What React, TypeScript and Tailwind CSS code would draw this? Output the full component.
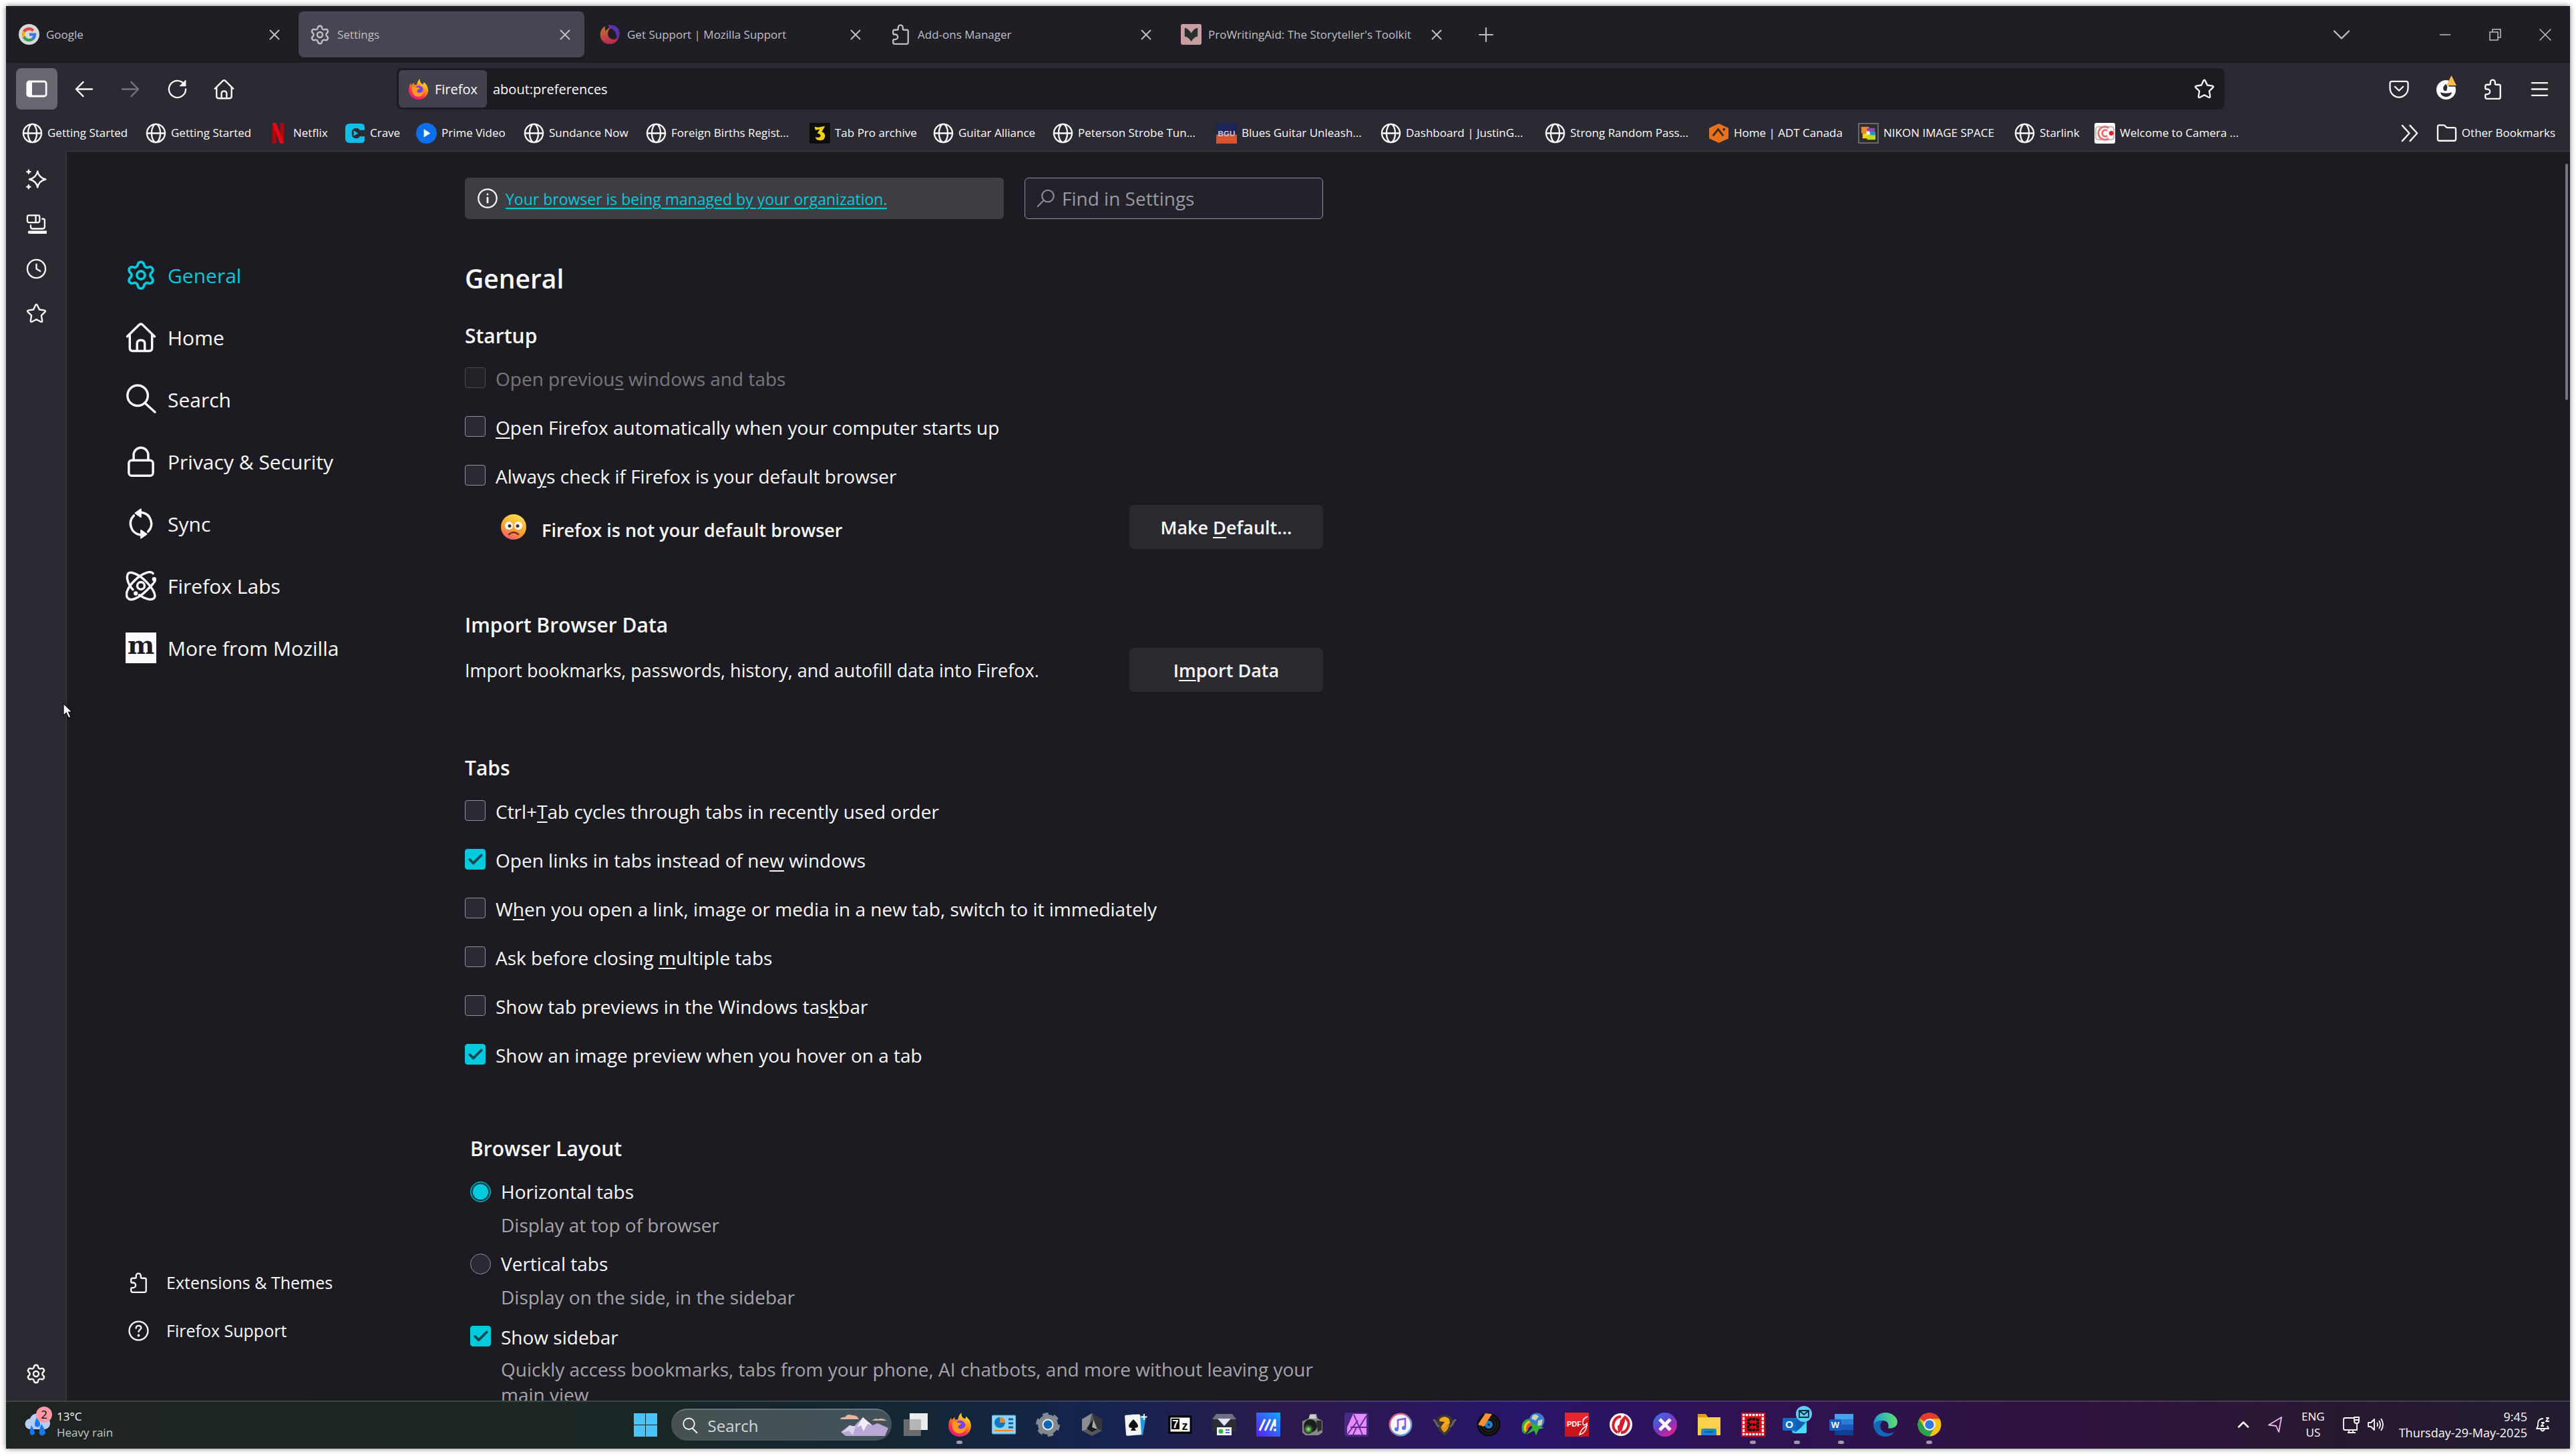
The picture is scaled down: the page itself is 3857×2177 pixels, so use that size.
import type { ReactNode } from "react";
import { Check, ChevronDown, ChevronUp, Minus, Plus, Settings, X } from "lucide-react";

/* ---------- line icons, 16 unit grid ---------- */

function Line({ size = "size-[31px]", children }: { size?: string; children: ReactNode }) {
  return (
    <svg
      viewBox="0 0 16 16"
      className={`${size} shrink-0`}
      fill="none"
      stroke="currentColor"
      strokeWidth="1.2"
      strokeLinecap="round"
      strokeLinejoin="round"
      aria-hidden="true"
    >
      {children}
    </svg>
  );
}

const puzzle = (
  <path d="M2.2 6.4V5.6q0-1.1 1.1-1.1h2q.8 0 .8-.8V2.6a1.8 1.8 0 0 1 3.600 0v1.100q0 .8.8.8h2.200q1.100 0 1.100 1.100v8.600q0 1.200-1.200 1.200H3.400q-1.200 0-1.200-1.200v-1.600q0-.7.7-.7h.9a1.800 1.800 0 0 0 0-3.900h-.9q-.7 0-.7-.9z" />
);

const house = (
  <>
    <path d="M.9 7.600 7 1.600q1-1 2 0l6.100 6" />
    <path d="M2.200 6.600v7q0 1.500 1.500 1.500h8.600q1.500 0 1.500-1.500v-7" />
    <path d="M6 15v-3.600q0-1.900 2-1.900t2 1.900V15" />
  </>
);

const star = (
  <path d="M7.300 1.500q.7-1.300 1.400 0l1.600 3.400 3.900.6q1.300.3.4 1.300l-2.800 2.700.7 4q.1 1.300-1.100.8L8 12.500l-3.400 1.800q-1.200.5-1.100-.8l.7-4L1.400 6.800q-.9-1 .4-1.300l3.900-.6z" />
);

const globe = (
  <>
    <circle cx="8" cy="8" r="7" />
    <ellipse cx="8" cy="8" rx="3.4" ry="7" />
    <path d="M1 8h14" />
  </>
);

const lock = (
  <>
    <rect x="1.7" y="7.4" width="12.6" height="8" rx="1.5" />
    <path d="M4.200 7.200V4.600a3.800 3.800 0 0 1 7.600 0v2.600" />
  </>
);

const search = (
  <>
    <circle cx="6.3" cy="6" r="5.300" />
    <path d="m10.200 10 5.100 4.600" />
  </>
);

const sync = (
  <>
    <path d="M4.300 3.800A5.900 5.900 0 0 0 7.600 13.800M11.700 12.200A5.900 5.900 0 0 0 8.400 2.200" />
    <path d="M8 .4v4.200L5 2.500zM8 11.400v4.200l3-2.100z" fill="currentColor" strokeWidth=".6" />
  </>
);

const labs = (
  <>
    <circle cx="8" cy="8" r="1.9" />
    <path d="M14.300 1.600C12.900-.2 8.300 1.800 4.700 5.300S-.5 12.600 1.200 14.500s6-.4 9.600-3.900 4.300-4.700 4.500-5.100" strokeDasharray="38 1" />
    <path d="M3.800 10C.9 7 .2 3 1.400 1.600s5.600.5 9.100 4 5.800 7.400 4.300 8.900c-1.500 1.400-4.900.3-7.600-1.700" />
    <circle cx="5.3" cy="12" r=".5" fill="currentColor" />
    <circle cx="14.900" cy="4.600" r=".5" fill="currentColor" />
  </>
);

const sparkles = (
  <>
    <path d="M8.900 1.800q.9 4.900 6.300 6.200-5.400 1.300-6.300 6.200Q8 9.300 2.600 8 8 6.700 8.900 1.800z" />
    <path d="M2 .9v2.600M.7 2.200h2.600M2 12.500v2.600M.7 13.800h2.600" />
  </>
);

const syncedTabs = (
  <>
    <rect x="1" y="1.2" width="9.5" height="5.6" rx="1.2" />
    <path d="M7.500 1.400v5.200M12.500 4h.8q1.100 0 1.100 1.100v5q0 1.500-1.500 1.500H5q-1.400 0-1.400-1.600V9" />
    <path d="M2.600 14.300h12.800" strokeWidth="2.4" />
  </>
);

const clock = (
  <>
    <circle cx="8" cy="8" r="7" />
    <path d="M8 4.500V8l3 1.800" />
  </>
);

const help = (
  <>
    <circle cx="8" cy="8" r="7.2" />
    <path d="M6 6q.1-1.900 2-1.900t2 1.700c0 1.300-2 1.400-2 3" />
    <circle cx="8" cy="11.6" r=".4" fill="currentColor" />
  </>
);

const gear = <Settings className="size-[32px] shrink-0" strokeWidth={1.8} />;

/* ---------- coloured marks ---------- */

function FirefoxLogo({ size }: { size: string }) {
  return (
    <svg viewBox="0 0 32 32" className={`${size} shrink-0`} aria-hidden="true">
      <defs>
        <linearGradient id="fx-body" x1=".8" y1="0" x2=".25" y2="1">
          <stop offset="0" stopColor="#fff44f" />
          <stop offset=".4" stopColor="#ff980e" />
          <stop offset=".7" stopColor="#ff3647" />
          <stop offset="1" stopColor="#e31587" />
        </linearGradient>
      </defs>
      <path
        fill="url(#fx-body)"
        d="M18.500 0c-1 3 .3 5.600 2.500 7.400 2 1.400 3.300 1 3.200-2.200C28 8 31 12 31 18c0 8-6.700 14-15 14S1 26 1 17.600c0-4 1-7.600 3.600-10.800l.7 3.200 3.800-4 .6 3.600c1.200-.4 2.600-.4 3.700 0C14 6 15.600 2 18.500 0z"
      />
      <circle cx="16.500" cy="17.500" r="7" fill="#7a3ff2" />
      <path fill="#ff9a1f" d="M6 13c3-2 5-1.400 7.500.5 2 .7 3.500 0 5 1-1 1.800-3.500 2-4.500 3.500-.8 1.500.5 4 4 3.700 3-.3 5-2 5.500-5 2 6-2.500 11-8 11S5 23 6 13z" />
    </svg>
  );
}

function GoogleMark() {
  return (
    <svg viewBox="0 0 32 32" className="size-[31px] shrink-0" aria-hidden="true">
      <circle cx="16" cy="16" r="16" fill="#d9d9db" />
      <g fill="none" strokeWidth="4.5">
        <path d="M22.500 10.200A9 9 0 0 0 8 12.200" stroke="#e2483b" />
        <path d="M8.300 11.600a9 9 0 0 0 0 8.800" stroke="#efb412" />
        <path d="M8 19.800a9 9 0 0 0 13.800 3" stroke="#33a053" />
        <path d="M16.500 16.200h8.300a9 9 0 0 1-3.300 6.800" stroke="#3b78e0" />
      </g>
    </svg>
  );
}

function MozillaSupportMark() {
  return (
    <svg viewBox="0 0 32 32" className="size-[31px] shrink-0" aria-hidden="true">
      <defs>
        <linearGradient id="sumo" x1="0" y1="0" x2=".4" y2="1">
          <stop offset="0" stopColor="#c9772e" />
          <stop offset="1" stopColor="#b8284f" />
        </linearGradient>
      </defs>
      <path d="M12 2c10-3 19 4 19 13a12 12 0 0 1-5 9c1-7-2-15-9-17z" fill="#5a2fae" />
      <path d="M8 3C2 8 0 13 1 19c1 7 7 12 14.500 12S28 26 30 18c-3 6-10 7-14 4-5-4-5-12 2-18C13 6 11 8 9 11c-1-3-1-5-1-8z" fill="url(#sumo)" />
    </svg>
  );
}

/* small square favicon with a coloured ground */
function Tile({ bg, children }: { bg: string; children?: ReactNode }) {
  return (
    <svg viewBox="0 0 32 32" className="size-[31px] shrink-0" aria-hidden="true">
      <rect width="32" height="32" rx="3" fill={bg} />
      {children}
    </svg>
  );
}

const svgFont = "Liberation Sans, sans-serif";

const favicons = {
  globe: <Line>{globe}</Line>,
  netflix: (
    <svg viewBox="0 0 32 32" className="size-[31px] shrink-0" aria-hidden="true">
      <path d="M7 0h6v32H7zM19 0h6v32h-6z" fill="#b1060f" />
      <path d="M7 0h6l12 32h-6z" fill="#e50914" />
    </svg>
  ),
  crave: (
    <svg viewBox="0 0 32 32" className="size-[31px] shrink-0" aria-hidden="true">
      <path d="M8 1h17q6 0 6 6v4h-8q-1-3-5-3-7 0-7 8t7 8q4 0 5-3h8v5q0 5-6 5H8q-7 0-7-7V8q0-7 7-7z" fill="#12bdec" />
      <path d="M14 11.500 21 16l-7 4.500z" fill="#12bdec" />
    </svg>
  ),
  prime: (
    <svg viewBox="0 0 32 32" className="size-[31px] shrink-0" aria-hidden="true">
      <circle cx="16" cy="16" r="16" fill="#0b6ff0" />
      <path d="M12 9.500 22 16l-10 6.500z" fill="#fff" />
    </svg>
  ),
  tabPro: (
    <Tile bg="#0d0d0d">
      <path d="m8 6 5 1 11-2-5 9q5 1 5 6 0 7-8 7-6 0-7-5 6 2 8-1 1-4-5-5l4-6-7 1z" fill="#f2d016" />
    </Tile>
  ),
  blues: (
    <Tile bg="#1d2457">
      <path d="M0 18h32v14H0z" fill="#d9532c" />
      <text x="16" y="21" textAnchor="middle" fontSize="12" fontWeight="700" fontFamily={svgFont} fill="#cfc5da">BGU</text>
    </Tile>
  ),
  adt: (
    <svg viewBox="0 0 32 32" className="size-[31px] shrink-0" aria-hidden="true">
      <path d="M16 1 31 8v16l-15 7L1 24V8z" fill="#e8711c" />
      <path d="m7 20 8-10 8 10" fill="none" stroke="#3c2a1e" strokeWidth="3" />
      <circle cx="24" cy="10" r="2" fill="#3c2a1e" />
    </svg>
  ),
  nikon: (
    <Tile bg="#2d2c2b">
      <rect x="1" y="1" width="30" height="30" fill="none" stroke="#6b6b6b" strokeWidth="2" />
      <path d="M5 6h12v10H5z" fill="#f0872f" />
      <path d="M14 8h12v9H14z" fill="#8d48b4" />
      <path d="M14 16h13v10H14z" fill="#c3d62e" />
      <path d="M7 16h8v8H7z" fill="#f2d500" />
      <path d="M19 14h8v5h-8z" fill="#10a3c8" />
      <path d="M13 13h5v5h-5z" fill="#fff" />
    </Tile>
  ),
  camera: (
    <Tile bg="#fff">
      <rect x="2" y="6" width="28" height="20" rx="4" fill="none" stroke="#b9b9b9" strokeWidth="2" />
      <path d="M22 8a10 10 0 1 0 0 16M20 12a5 5 0 1 0 0 8" fill="none" stroke="#ea7078" strokeWidth="3" />
      <circle cx="26" cy="16" r="3.5" fill="#e2202c" />
    </Tile>
  ),
};

/* ---------- tab strip ---------- */

const tabs = [
  { title: "Google", icon: <GoogleMark /> },
  { title: "Settings", icon: gear, active: true },
  { title: "Get Support | Mozilla Support", icon: <MozillaSupportMark /> },
  { title: "Add-ons Manager", icon: <Line>{puzzle}</Line> },
  {
    title: "ProWritingAid: The Storyteller's Toolkit",
    icon: (
      <Tile bg="#c99ea2">
        <path d="M6 6q6 1 10 8 4-7 10-8v13q-6 1-10 8-4-7-10-8z" fill="#25302f" />
      </Tile>
    ),
  },
];

function TabStrip() {
  return (
    <header className="flex h-[85px] shrink-0 items-center bg-[#1f1e25] pl-[3px] text-[#bfbfc3]">
      <div className="flex gap-[7px]">
        {tabs.map((tab) => (
          <div
            key={tab.title}
            className={`flex h-[69px] w-[428px] items-center rounded-lg pr-[14px] pl-[16px] ${tab.active ? "bg-[#474551] shadow-md" : ""}`}
          >
            {tab.icon}
            <span className="ml-[10px] flex-1 truncate text-[17px]">{tab.title}</span>
            <button aria-label={`Close ${tab.title}`} className="flex size-[31px] items-center justify-center">
              <X className="size-[26px]" strokeWidth={1.8} />
            </button>
          </div>
        ))}
      </div>
      <button aria-label="New tab" className="ml-[14px] flex size-[62px] items-center justify-center">
        <Plus className="size-[34px]" strokeWidth={1.5} />
      </button>
      <div className="ml-auto flex items-center">
        <button aria-label="List all tabs" className="mr-[86px] flex size-[62px] items-center justify-center">
          <ChevronDown className="size-[44px]" strokeWidth={1.3} />
        </button>
        <button aria-label="Minimize" className="flex w-[75px] justify-center">
          <Minus className="size-[26px]" strokeWidth={1.2} />
        </button>
        <button aria-label="Restore" className="flex w-[75px] justify-center">
          <svg viewBox="0 0 18 18" className="size-[18px]" fill="none" stroke="currentColor" strokeWidth="1.5">
            <path d="M1 5h12v12H1zM5 5V1h12v12h-4" />
          </svg>
        </button>
        <button aria-label="Close window" className="flex w-[75px] justify-center">
          <X className="size-[32px]" strokeWidth={1.1} />
        </button>
      </div>
    </header>
  );
}

/* ---------- navigation and bookmarks ---------- */

function ToolButton({ label, className = "", children }: { label: string; className?: string; children: ReactNode }) {
  return (
    <button aria-label={label} className={`flex size-[62px] shrink-0 items-center justify-center rounded-lg ${className}`}>
      {children}
    </button>
  );
}

function NavBar() {
  return (
    <div className="flex h-[78px] shrink-0 items-center px-[15px]">
      <ToolButton label="Show sidebars" className="bg-[#686770]">
        <svg viewBox="0 0 16 16" className="size-[32px]" fill="none" stroke="currentColor">
          <rect x=".9" y="2.5" width="14.2" height="11" rx="1.5" strokeWidth="1.4" />
          <path d="M3 3v10" strokeWidth="3" />
        </svg>
      </ToolButton>
      <div className="ml-2 flex gap-2">
        <ToolButton label="Back">
          <Line><path d="M14.500 8H2M7.500 2.500 2 8l5.500 5.500" /></Line>
        </ToolButton>
        <ToolButton label="Forward" className="text-[#74737b]">
          <Line><path d="M1.500 8H14M8.500 2.500 14 8l-5.500 5.500" /></Line>
        </ToolButton>
        <ToolButton label="Reload">
          <Line>
            <path d="M13.300 4.200A6.500 6.500 0 1 0 14.500 8" />
            <path d="M14.400 1.200v4.300h-4.300z" fill="currentColor" strokeWidth=".6" />
          </Line>
        </ToolButton>
        <ToolButton label="Home">
          <Line>{house}</Line>
        </ToolButton>
      </div>
      <div className="mr-[230px] ml-[228px] flex h-[62px] flex-1 items-center rounded-lg bg-[#1c1b22] pl-[3px]">
        <div className="flex h-[56px] w-[132px] items-center justify-center gap-[9px] rounded-md bg-[#42414d]">
          <FirefoxLogo size="size-[31px]" />
          <span className="pt-[2px] text-[20px]">Firefox</span>
        </div>
        <input
          aria-label="Search or enter address"
          defaultValue="about:preferences"
          className="ml-[9px] flex-1 bg-transparent pt-[2px] text-[20px] outline-none"
        />
        <ToolButton label="Bookmark this page">
          <Line>{star}</Line>
        </ToolButton>
      </div>
      <div className="flex gap-[8px]">
        <ToolButton label="Save to Pocket">
          <Line size="size-[30px]">
            <path d="M2.300 2.100h11.400q1.500 0 1.500 1.500V7.500a7.200 7.200 0 0 1-14.400 0V3.600q0-1.500 1.500-1.500z" />
            <path d="M4.700 6.300 8 9.500l3.300-3.200" />
          </Line>
        </ToolButton>
        <ToolButton label="Account" className="relative">
          <svg viewBox="0 0 32 32" className="size-[31px]">
            <circle cx="16" cy="17" r="15" fill="currentColor" />
            <path d="M16 8q-6 4-4 9 2 3 5 1l1-6z" fill="#2b2a33" />
            <path d="M7 21q9 3 18 0-2 7-9 7t-9-7z" fill="#2b2a33" />
            <path d="M20 0h12v12H20z" fill="#2b2a33" />
          </svg>
          <svg viewBox="0 0 14 14" className="absolute top-[11px] right-[15px] size-[15px]">
            <path d="M7 0 14 14H0z" fill="#ffbd4f" />
          </svg>
        </ToolButton>
        <ToolButton label="Extensions">
          <Line>{puzzle}</Line>
        </ToolButton>
        <ToolButton label="Open application menu">
          <Line><path d="M2 3.200h12M2 8h12M2 12.800h12" /></Line>
        </ToolButton>
      </div>
    </div>
  );
}

const bookmarks = [
  { label: "Getting Started", icon: favicons.globe, width: "w-[185px]" },
  { label: "Getting Started", icon: favicons.globe, width: "w-[183px]" },
  { label: "Netflix", icon: favicons.netflix, width: "w-[115px]" },
  { label: "Crave", icon: favicons.crave, width: "w-[107px]" },
  { label: "Prime Video", icon: favicons.prime, width: "w-[161px]" },
  { label: "Sundance Now", icon: favicons.globe, width: "w-[183px]" },
  { label: "Foreign Births Regist...", icon: favicons.globe, width: "w-[245px]" },
  { label: "Tab Pro archive", icon: favicons.tabPro, width: "w-[185px]" },
  { label: "Guitar Alliance", icon: favicons.globe, width: "w-[179px]" },
  { label: "Peterson Strobe Tun...", icon: favicons.globe, width: "w-[245px]" },
  { label: "Blues Guitar Unleash...", icon: favicons.blues, width: "w-[246px]" },
  { label: "Dashboard | JustinG...", icon: favicons.globe, width: "w-[246px]" },
  { label: "Strong Random Pass...", icon: favicons.globe, width: "w-[245px]" },
  { label: "Home | ADT Canada", icon: favicons.adt, width: "w-[224px]" },
  { label: "NIKON IMAGE SPACE", icon: favicons.nikon, width: "w-[234px]" },
  { label: "Starlink", icon: favicons.globe, width: "w-[120px]" },
  { label: "Welcome to Camera ...", icon: favicons.camera, width: "w-[246px]" },
];

function BookmarksBar() {
  return (
    <nav aria-label="Bookmarks" className="flex h-[54px] shrink-0 items-center pr-[22px] pl-[24px] text-[17px] whitespace-nowrap">
      {bookmarks.map((b, i) => (
        <a key={i} href="#" className={`flex shrink-0 items-center gap-[7px] ${b.width}`}>
          {b.icon}
          <span>{b.label}</span>
        </a>
      ))}
      <button aria-label="Show more bookmarks" className="ml-auto">
        <Line><path d="M2.500 2 8 8l-5.500 6M8.500 2 14 8l-5.500 6" /></Line>
      </button>
      <a href="#" className="ml-[25px] flex items-center gap-[7px]">
        <Line>
          <path d="M1 12.500V3q0-1.300 1.300-1.300h3.200q.7 0 1.200.6l.9 1q.3.400.9.400h5.200q1.300 0 1.300 1.300v7.500q0 1.300-1.300 1.300H2.300Q1 13.800 1 12.500z" />
        </Line>
        <span>Other Bookmarks</span>
      </a>
    </nav>
  );
}

/* ---------- settings page ---------- */

const categories = [
  { label: "General", icon: <Settings className="size-[48px] shrink-0" strokeWidth={1.9} />, active: true },
  { label: "Home", icon: <Line size="size-[46px]">{house}</Line> },
  { label: "Search", icon: <Line size="size-[46px]">{search}</Line> },
  { label: "Privacy & Security", icon: <Line size="size-[46px]">{lock}</Line> },
  { label: "Sync", icon: <Line size="size-[46px]">{sync}</Line> },
  { label: "Firefox Labs", icon: <Line size="size-[46px]">{labs}</Line> },
  {
    label: "More from Mozilla",
    icon: (
      <span className="flex size-[46px] items-center justify-center bg-[#fbfbfe] pb-[8px] font-['DejaVu_Serif',serif] text-[38px] leading-[38px] font-bold text-[#1c1b22]">
        m
      </span>
    ),
  },
];

function Categories() {
  return (
    <nav aria-label="Settings categories" className="flex w-[596px] shrink-0 flex-col pt-[138px] pb-[69px] pl-[87px]">
      {categories.map((c) => (
        <a key={c.label} href="#" className={`flex h-[93px] items-center ${c.active ? "text-[#00cadb]" : ""}`}>
          <span className="flex w-[48px] justify-center">{c.icon}</span>
          <span className="ml-[16px] pt-[2px] text-[30px]">{c.label}</span>
        </a>
      ))}
      <div className="mt-auto text-[25px]">
        <a href="#" className="flex h-[72px] items-center pl-[5px]">
          <Line>{puzzle}</Line>
          <span className="ml-[26px] pt-[2px]">Extensions &amp; Themes</span>
        </a>
        <a href="#" className="flex h-[72px] items-center pl-[5px]">
          <Line>{help}</Line>
          <span className="ml-[26px] pt-[2px]">Firefox Support</span>
        </a>
      </div>
    </nav>
  );
}

/* "_" marks the access key that follows it */
function AccessText({ text }: { text: string }) {
  const at = text.indexOf("_");
  if (at < 0) return <>{text}</>;
  return (
    <>
      {text.slice(0, at)}
      <u className="decoration-2 underline-offset-4">{text[at + 1]}</u>
      {text.slice(at + 2)}
    </>
  );
}

function CheckBox({ text, checked = false, disabled = false }: { text: string; checked?: boolean; disabled?: boolean }) {
  return (
    <label className={`flex items-start gap-[15px] ${disabled ? "opacity-40" : ""}`}>
      <span className="grid size-[31px] shrink-0">
        <input
          type="checkbox"
          defaultChecked={checked}
          disabled={disabled}
          className="peer col-start-1 row-start-1 size-[31px] appearance-none rounded-[4px] border border-[#8f8f9d] bg-[#2b2a33] checked:border-[#00cadb] checked:bg-[#00cadb]"
        />
        <Check className="pointer-events-none col-start-1 row-start-1 m-auto hidden size-[26px] text-[#154652] peer-checked:block" strokeWidth={3.5} />
      </span>
      <span className="leading-[35px]">
        <AccessText text={text} />
      </span>
    </label>
  );
}

function Radio({ text, note, checked = false }: { text: string; note: string; checked?: boolean }) {
  return (
    <div>
      <label className="flex items-start gap-[15px]">
        <input
          type="radio"
          name="tab-layout"
          defaultChecked={checked}
          className="size-[31px] shrink-0 appearance-none rounded-full border border-[#8f8f9d] bg-[#2b2a33] checked:border-[#00cadb] checked:bg-[#00cadb] checked:shadow-[inset_0_0_0_3px_#0d4a55]"
        />
        <span className="leading-[31px]">{text}</span>
      </label>
      <p className="mt-[15px] pl-[46px] leading-[38px] text-[#a5a4aa]">{note}</p>
    </div>
  );
}

function PushButton({ text }: { text: string }) {
  return (
    <button className="h-[66px] w-[290px] shrink-0 rounded-lg bg-[#2b2a31] pt-[2px] text-[27px] font-semibold">
      <AccessText text={text} />
    </button>
  );
}

function WorriedFace() {
  return (
    <svg viewBox="0 0 38 38" className="size-[38px] shrink-0" aria-hidden="true">
      <defs>
        <linearGradient id="face" x1=".7" y1="0" x2=".3" y2="1">
          <stop offset="0" stopColor="#ffe04a" />
          <stop offset=".6" stopColor="#fc9f2e" />
          <stop offset="1" stopColor="#f0567a" />
        </linearGradient>
      </defs>
      <circle cx="19" cy="19" r="19" fill="url(#face)" />
      <circle cx="12" cy="17" r="6" fill="#fff" />
      <circle cx="26" cy="17" r="6" fill="#fff" />
      <circle cx="13" cy="17.5" r="2.5" fill="#4a2b1d" />
      <circle cx="25" cy="17.5" r="2.5" fill="#4a2b1d" />
      <path d="M12 30q7-6 14 0" fill="none" stroke="#7a2c28" strokeWidth="2.5" strokeLinecap="round" />
    </svg>
  );
}

const heading = "text-[30px] leading-[40px] font-semibold";

function Preferences() {
  return (
    <main className="w-[1285px] shrink-0 pt-[39px] text-[28px]">
      <div className="flex gap-[31px]">
        <div className="flex h-[62px] flex-1 items-center gap-[12px] rounded-md bg-[#3e3d43] pl-[19px]">
          <Line size="size-[30px]">
            <circle cx="8" cy="8" r="7.3" />
            <path d="M8 7.500v3.800M8 4.700v.1" strokeWidth="1.5" />
          </Line>
          <a href="#" className="pt-[2px] text-[23px] text-[#00cadb] underline decoration-2 underline-offset-4">
            Your browser is being managed by your organization.
          </a>
        </div>
        <label className="flex h-[62px] w-[447px] items-center gap-[10px] rounded-md border border-[#8f8f9d] bg-[#23222b] pl-[17px] text-[#8f8e96]">
          <Line size="size-[28px]">
            <circle cx="9.7" cy="6" r="5" />
            <path d="m6 9.800-5 5" />
          </Line>
          <input aria-label="Find in Settings" placeholder="Find in Settings" className="w-full bg-transparent outline-none placeholder:text-[#9a99a0]" />
        </label>
      </div>

      <h1 className="mt-[63px] text-[39px] leading-[52px] font-semibold">General</h1>

      <section className="mt-[40px]">
        <h2 className={heading}>Startup</h2>
        <div className="mt-[27px] flex flex-col gap-[38px]">
          <CheckBox text="Open previou_s windows and tabs" disabled />
          <CheckBox text="_Open Firefox automatically when your computer starts up" />
          <CheckBox text="Alwa_ys check if Firefox is your default browser" />
        </div>
        <div className="mt-[25px] flex items-center pl-[54px]">
          <WorriedFace />
          <span className="ml-[23px] flex-1 pt-[10px] text-[27px] font-semibold">Firefox is not your default browser</span>
          <PushButton text="Make _Default..." />
        </div>
      </section>

      <section className="mt-[94px]">
        <h2 className={heading}>Import Browser Data</h2>
        <div className="mt-[14px] flex items-center justify-between">
          <p className="pt-[2px] text-[27px]">Import bookmarks, passwords, history, and autofill data into Firefox.</p>
          <PushButton text="I_mport Data" />
        </div>
      </section>

      <section className="mt-[94px]">
        <h2 className={heading}>Tabs</h2>
        <div className="mt-[28px] flex flex-col gap-[38px]">
          <CheckBox text="Ctrl+_Tab cycles through tabs in recently used order" />
          <CheckBox text="Open links in tabs instead of ne_w windows" checked />
          <CheckBox text="W_hen you open a link, image or media in a new tab, switch to it immediately" />
          <CheckBox text="Ask before closing _multiple tabs" />
          <CheckBox text="Show tab previews in the Windows tas_kbar" />
          <CheckBox text="Show an image preview when you hover on a tab" checked />
        </div>
      </section>

      <section className="mt-[102px] pl-[8px]">
        <h2 className={heading}>Browser Layout</h2>
        <div className="mt-[29px] flex flex-col gap-[24px]">
          <Radio text="Horizontal tabs" note="Display at top of browser" checked />
          <Radio text="Vertical tabs" note="Display on the side, in the sidebar" />
          <div>
            <CheckBox text="Show sidebar" checked />
            <p className="mt-[11px] pl-[46px] leading-[38px] text-[#a5a4aa]">
              Quickly access bookmarks, tabs from your phone, AI chatbots, and more without leaving your main view
            </p>
          </div>
        </div>
      </section>
    </main>
  );
}

function Launcher() {
  return (
    <aside className="flex w-[90px] shrink-0 flex-col items-center gap-[5px] pt-[11px] pb-[9px]">
      <ToolButton label="AI chatbot"><Line>{sparkles}</Line></ToolButton>
      <ToolButton label="Tabs from other devices"><Line>{syncedTabs}</Line></ToolButton>
      <ToolButton label="History"><Line>{clock}</Line></ToolButton>
      <ToolButton label="Bookmarks"><Line>{star}</Line></ToolButton>
      <ToolButton label="Customize sidebar" className="mt-auto">{gear}</ToolButton>
    </aside>
  );
}

/* ---------- taskbar ---------- */

function App36({ children }: { children: ReactNode }) {
  return (
    <svg viewBox="0 0 36 36" className="size-[36px]" aria-hidden="true">
      {children}
    </svg>
  );
}

const apps: { name: string; running?: boolean; icon: ReactNode }[] = [
  {
    name: "Task view",
    icon: (
      <App36>
        <path d="M0 10h26v25H0z" fill="#6a6b6d" />
        <path d="M9 1h27v25H9z" fill="#ececec" />
        <path d="M9 10h17v16H9z" fill="#b5b5b5" />
      </App36>
    ),
  },
  { name: "Firefox", running: true, icon: <FirefoxLogo size="size-[36px]" /> },
  {
    name: "Control Panel",
    icon: (
      <App36>
        <rect y="4" width="36" height="28" rx="2" fill="#8ed4f5" stroke="#2f9fd8" />
        <circle cx="12" cy="15" r="8" fill="#1278c4" />
        <path d="M12 15V7a8 8 0 0 1 8 8z" fill="#f58a1f" />
        <path d="M25 10h7M25 16h7M25 22h7" stroke="#0f5fa8" strokeWidth="3" />
        <path d="M4 27h28" stroke="#f58a1f" strokeWidth="2" />
      </App36>
    ),
  },
  {
    name: "Settings",
    icon: (
      <App36>
        <circle cx="18" cy="18" r="11" fill="none" stroke="#84898f" strokeWidth="8" />
        <circle cx="18" cy="18" r="15" fill="none" stroke="#84898f" strokeWidth="6" strokeDasharray="8 7.7" />
        <circle cx="18" cy="18" r="7.5" fill="#1366b8" stroke="#e8eef4" strokeWidth="2" />
      </App36>
    ),
  },
  {
    name: "Gem",
    icon: (
      <App36>
        <path d="m18 1 15 9v17l-15 8-15-8V10z" fill="#55585c" />
        <path d="M18 1 3 10v17l9-2z" fill="#8a8d91" />
        <path d="m18 1 15 9v17l-8-3z" fill="#34363a" />
        <path d="m20 10-10 14 8 5 8-4z" fill="#17181a" />
        <path d="m20 10 6 15-8-3z" fill="#a8abae" />
      </App36>
    ),
  },
  {
    name: "Solitaire",
    icon: (
      <App36>
        <path d="M12 2 33 6l-5 28-20-3z" fill="#2496d8" />
        <rect x="2" y="3" width="23" height="31" rx="2" fill="#f5f5f5" transform="rotate(-4 14 18)" />
        <path d="M14 10q7 7 7 10t-5 3l2 4h-8l2-4q-5 0-5-3t7-10z" fill="#111" />
        <path d="M30 2v9M25.500 6.500h9" stroke="#fff" strokeWidth="2" />
      </App36>
    ),
  },
  {
    name: "7-Zip",
    icon: (
      <App36>
        <path d="M2 6h32v24H2z" fill="#fff" stroke="#000" strokeWidth="3" />
        <path d="M5 9h12v16H5z" fill="#000" />
        <text x="11" y="23" textAnchor="middle" fontSize="17" fontWeight="700" fontFamily={svgFont} fill="#fff">7</text>
        <text x="25" y="26" textAnchor="middle" fontSize="18" fontWeight="700" fontFamily={svgFont} fill="#000">z</text>
      </App36>
    ),
  },
  {
    name: "File tray",
    icon: (
      <App36>
        <path d="M6 2h24l6 11v15H0V13z" fill="#2c2d35" />
        <path d="M6 2h24l6 8H0z" fill="#6d7182" />
        <path d="M8 9h20L18 20z" fill="#dfe4f2" />
        <path d="M7 22h22v12H7z" fill="#fff" />
        <circle cx="13" cy="28" r="3.5" fill="#3cae52" />
        <path d="M20 26h6M20 30h6" stroke="#3b6fe0" strokeWidth="2" />
      </App36>
    ),
  },
  {
    name: "Monogram",
    icon: (
      <App36>
        <defs>
          <linearGradient id="mono" x1="1" y1="0" x2="0" y2="1">
            <stop offset="0" stopColor="#12a5ff" />
            <stop offset="1" stopColor="#5a1df5" />
          </linearGradient>
        </defs>
        <path d="M0 0h36v36H0z" fill="url(#mono)" />
        <path d="m5 27 8-17M13 27l8-17M21 27l7-17v11" fill="none" stroke="#fff" strokeWidth="3" />
        <circle cx="28" cy="26" r="2" fill="#fff" />
      </App36>
    ),
  },
  {
    name: "Camera",
    icon: (
      <App36>
        <path d="M3 13 12 9l3-7h9l2 7 7 3v18l-6 4H8l-5-4z" fill="#858887" />
        <path d="M14 3h9l1 6H13z" fill="#c9cccb" />
        <path d="M24 12h8v14l-6 3z" fill="#2b2d2c" />
        <circle cx="15" cy="20" r="10" fill="#1c1d1d" />
        <circle cx="12" cy="25" r="7" fill="#3a3c3b" />
        <circle cx="12" cy="25" r="4.5" fill="#3f9d34" />
        <circle cx="12" cy="25" r="2" fill="#9be07c" />
      </App36>
    ),
  },
  {
    name: "Affinity Photo",
    icon: (
      <App36>
        <rect width="36" height="36" rx="4" fill="#4b2a86" />
        <path d="M13 2h20v31H4V22z" fill="#e88afc" />
        <path d="M14 3 27 33M20 12 4 33M9 22h24M33 5 22 22M4 33l0 0M18 22l-5 11" stroke="#5a2a92" strokeWidth="1.8" fill="none" />
      </App36>
    ),
  },
  {
    name: "iTunes",
    icon: (
      <App36>
        <defs>
          <linearGradient id="tunes" x1="0" y1="0" x2="1" y2="1">
            <stop offset="0" stopColor="#f84a72" />
            <stop offset="1" stopColor="#3fb5f5" />
          </linearGradient>
        </defs>
        <circle cx="18" cy="18" r="17.5" fill="url(#tunes)" />
        <circle cx="18" cy="18" r="15" fill="#f8f6fa" />
        <path d="M14 25V11l11-2v13" fill="none" stroke="#8b5be8" strokeWidth="2.5" />
        <circle cx="12" cy="25" r="3" fill="#4f7bf0" />
        <circle cx="23" cy="23" r="3" fill="#4f7bf0" />
      </App36>
    ),
  },
  {
    name: "Wasp",
    icon: (
      <App36>
        <path d="M18 3q12 1 12 11l-3 12-9 9-9-9-3-12Q6 4 18 3z" fill="#3b3735" />
        <path d="M11 9q8-6 14 1l1 6-9 7-5-1 6-8-8-1z" fill="#f4a623" />
        <path d="M12 23q8-1 13-6-1 9-8 13z" fill="#e8951c" />
        <path d="M1 12q2-2 4 3t5 6M35 12q-2-2-4 3t-5 6" stroke="#6a6461" strokeWidth="3" fill="none" />
      </App36>
    ),
  },
  {
    name: "Vinyl",
    icon: (
      <App36>
        <circle cx="18" cy="18" r="17.5" fill="#0c0c0d" />
        <circle cx="18" cy="18" r="14" fill="none" stroke="#2f2f31" />
        <circle cx="18" cy="18" r="10" fill="none" stroke="#3a3a3c" />
        <circle cx="18" cy="18" r="6" fill="#1584cf" />
        <circle cx="18" cy="18" r="1.5" fill="#0c0c0d" />
        <path d="m13 1 10 1-12 19-9-3z" fill="#f29137" />
      </App36>
    ),
  },
  {
    name: "Download Manager",
    icon: (
      <App36>
        <circle cx="24" cy="12" r="11.5" fill="#3c7bd0" />
        <path d="M18 4q6-3 9 2l-5 6-6-3zM26 12l7-2-2 9-6 1z" fill="#c9d6a4" />
        <path d="M12 9Q-1 12 2 28q2 4 6 4-4-9 8-14z" fill="#35a83a" />
        <path d="M13 12Q3 15 5 27l4 3q-2-8 7-12z" fill="#f5c518" />
        <path d="M14 15q-7 3-6 11l3 2q-1-6 6-9z" fill="#e5542c" />
        <path d="M15 15 35 23l-8 2-4 9-3-7-12 6 9-10z" fill="#34b233" />
      </App36>
    ),
  },
  {
    name: "PDF reader",
    icon: (
      <App36>
        <path d="M0 0h36v36H0z" fill="#e8242e" />
        <path d="M0 22 36 10v26H0z" fill="#c9141e" />
        <text x="3" y="21" fontSize="11" fontWeight="700" fontFamily={svgFont} fill="#fff">PDF</text>
        <path d="M34 6q-7 2-7 9t6 1q0 14-11 17 2-9 12-14" fill="none" stroke="#fff" strokeWidth="1.5" />
      </App36>
    ),
  },
  {
    name: "Backup",
    icon: (
      <App36>
        <circle cx="18" cy="18" r="17" fill="#fff" />
        <path d="M13 30Q4 24 7 15t11-9M23 6q9 6 6 15t-11 9" fill="none" stroke="#d3202d" strokeWidth="4" />
        <path d="m17 12 7-8v9l-5 15-5-3zM13 20l6-4v10l-5 6z" fill="#d3202d" />
      </App36>
    ),
  },
  {
    name: "Converter",
    icon: (
      <App36>
        <defs>
          <linearGradient id="conv" x1="0" y1="0" x2=".8" y2="1">
            <stop offset="0" stopColor="#2b7df2" />
            <stop offset=".5" stopColor="#6a3fc8" />
            <stop offset="1" stopColor="#e8178d" />
          </linearGradient>
        </defs>
        <circle cx="18" cy="18" r="18" fill="url(#conv)" />
        <path d="m10 10 16 16M26 10 10 26" stroke="#fff" strokeWidth="5" />
      </App36>
    ),
  },
  {
    name: "File Explorer",
    icon: (
      <App36>
        <path d="M1 2h12l3 4v8H1z" fill="#e09a12" />
        <path d="M1 7h34v27H1z" fill="#ffd14a" />
        <path d="M6 34v-7q0-3 3-3h17q3 0 3 3v7z" fill="#1a84d8" />
        <path d="M12 29h12" stroke="#0c5798" strokeWidth="2" />
      </App36>
    ),
  },
  {
    name: "Crossword",
    running: true,
    icon: (
      <App36>
        <path d="M1 1h34v34H1z" fill="#fff" stroke="#d80d16" strokeWidth="2" />
        <path d="M1 6h34M1 30h34M6 1v34M30 1v34M11 1v5M16 1v5M21 1v5M26 1v5M11 30v5M16 30v5M21 30v5M26 30v5M1 12h5M1 18h5M1 24h5M30 12h5M30 18h5M30 24h5" stroke="#d80d16" strokeWidth="1.5" />
        <path d="M6 6h24v24H6z" fill="#d80d16" />
        <path d="M12 10h12M12 18h12M12 26h12M11 9v18M25 9v18" stroke="#160304" strokeWidth="3.5" strokeDasharray="4 1" />
      </App36>
    ),
  },
  {
    name: "Outlook",
    running: true,
    icon: (
      <svg viewBox="0 0 44 44" className="-mt-3 size-[44px]" aria-hidden="true">
        <path d="M14 18h22v20q0 3-3 3H17q-3 0-3-3z" fill="#35bdf1" />
        <path d="M14 24 28 12l8 10-16 20z" fill="#0f5fb5" />
        <path d="M36 26v12q0 3-3 3H17z" fill="#50d9ff" />
        <rect y="18" width="20" height="19" rx="2" fill="#0f6cc4" />
        <text x="10" y="33" textAnchor="middle" fontSize="15" fontWeight="700" fontFamily={svgFont} fill="#fff">O</text>
        <circle cx="32" cy="12" r="12" fill="#60cdf8" />
        <path d="M25 7h14v10H25zM25 7l7 6 7-6" fill="none" stroke="#0b2a3a" strokeWidth="1.8" />
      </svg>
    ),
  },
  {
    name: "Word",
    running: true,
    icon: (
      <App36>
        <path d="M8 2h28v9H8z" fill="#41a5ee" />
        <path d="M8 10h28v8H8z" fill="#2b7cd3" />
        <path d="M8 18h28v8H8z" fill="#185abd" />
        <path d="M8 26h28v8H8z" fill="#103f91" />
        <rect y="10" width="18" height="17" rx="2" fill="#1a5dbe" />
        <text x="9" y="23" textAnchor="middle" fontSize="13" fontWeight="700" fontFamily={svgFont} fill="#fff">W</text>
      </App36>
    ),
  },
  {
    name: "Edge",
    icon: (
      <App36>
        <defs>
          <linearGradient id="edge" x1="0" y1=".4" x2="1" y2=".3">
            <stop offset="0" stopColor="#1f9bdc" />
            <stop offset="1" stopColor="#5fe06a" />
          </linearGradient>
        </defs>
        <path d="M0 17C1 7 8 0 18 0s18 7 18 14-7 11-14 9c2-6-1-11-8-11-6 0-11 3-14 5z" fill="url(#edge)" />
        <path d="M0 17c3-4 10-6 14-4-5 3-5 11 0 15s12 4 17 1c-3 5-8 7-13 7C8 36 0 28 0 17z" fill="#1467b8" />
      </App36>
    ),
  },
  {
    name: "Chrome",
    running: true,
    icon: (
      <App36>
        <circle cx="18" cy="18" r="17.5" fill="#fbc116" />
        <path d="M18 18 3 9A17.500 17.500 0 0 1 33.200 9.300H18z" fill="#e33b2e" />
        <path d="M18 18 10.500 22.500 2.800 9.300A17.500 17.500 0 0 0 18 35.500l7.500-13z" fill="#2ba24c" />
        <circle cx="18" cy="18" r="8.7" fill="#fff" />
        <circle cx="18" cy="18" r="6.8" fill="#3576e5" />
      </App36>
    ),
  },
];

function Taskbar() {
  return (
    <footer className="flex h-[72px] shrink-0 items-center justify-center border-t-2 border-white/15 bg-[linear-gradient(90deg,#1e2422_0%,#1a2625_24%,#132633_35%,#15234f_43%,#2b1a4b_50%,#28146a_59%,#2e1255_67%,#30123f_80%,#281832_90%,#221c30_100%)] pb-[2px] text-[17px] leading-[24px]">
      <div className="flex flex-1 items-center pl-[28px]">
        <div className="relative">
          <svg viewBox="0 0 38 38" className="size-[38px]" aria-hidden="true">
            <path d="M9 26a8 8 0 0 1-1-16 11 11 0 0 1 20-2 9 9 0 0 1 2 18z" fill="#b9cdf3" />
            <path d="M18 8q5 7 5 10a4 4 0 0 1-8 1q0-4 3-11zM10 20q5 8 5 12a4 4 0 0 1-7 1q-1-5 2-13zM25 18q6 9 6 14a5 5 0 0 1-9 1q-1-6 3-15z" fill="#1478f2" />
          </svg>
          <span className="absolute -top-[8px] left-[17px] flex size-[24px] items-center justify-center rounded-full bg-[#ff99a4] text-black">2</span>
        </div>
        <p className="ml-[10px]">
          13°C
          <span className="block text-[#c6c8c8]">Heavy rain</span>
        </p>
      </div>

      <div className="flex items-center">
        <button aria-label="Start" className="flex w-[66px] justify-center">
          <svg viewBox="0 0 35 35" className="size-[35px]">
            <path d="M0 0h17v17H0zM18 0h17v17H18zM0 18h17v17H0zM18 18h17v17H18z" fill="#4cc2fa" />
          </svg>
        </button>
        <label className="mr-[3px] ml-[5px] flex h-[48px] w-[330px] items-center rounded-full border-t-2 border-white/20 bg-white/20 pl-[16px]">
          <Line size="size-[24px]">
            <circle cx="7" cy="6.5" r="5.5" />
            <path d="m10.500 11 4.500 4.500" />
          </Line>
          <input aria-label="Search" placeholder="Search" className="ml-[15px] w-[180px] bg-transparent text-[24px] outline-none placeholder:text-[#d5d9da]" />
          <svg viewBox="0 0 74 36" className="ml-[18px] h-[36px] w-[74px]" aria-hidden="true">
            <path d="M1 28 14 18l6 2 14-14 14 12 8-3 16 7-5 12H8z" fill="#b9a8d6" />
            <path d="m34 6-9 15 6-3 4 9 6-11 7 2z" fill="#f1edf8" />
            <path d="M14 18 3 29l10-3 6 7 4-13z" fill="#dcd6ec" />
            <path d="M0 9q2-4 7-3 4-6 11-3 7-1 10 6zM48 11q4-4 9-2 5-3 13 2z" fill="#e6b39c" />
          </svg>
        </label>
        {apps.map((app) => (
          <button key={app.name} aria-label={app.name} className="relative flex h-[68px] w-[66px] items-center justify-center">
            {app.icon}
            {app.running && <span className="absolute bottom-[5px] h-[5px] w-[9px] rounded-full bg-[#9c98ac]" />}
          </button>
        ))}
      </div>

      <div className="flex flex-1 items-center justify-end pr-[30px]">
        <ChevronUp className="size-[28px]" strokeWidth={2.2} />
        <svg viewBox="0 0 22 24" className="ml-[22px] size-[24px]" fill="none" stroke="#f0b8f2" strokeWidth="1.8" strokeLinejoin="round">
          <path d="M20 1 1 12.500l11 1.500 4 9z" />
        </svg>
        <p className="ml-[27px] text-center">
          ENG
          <span className="block">US</span>
        </p>
        <svg viewBox="0 0 25 25" className="ml-[27px] size-[25px]" fill="none" stroke="currentColor" strokeWidth="1.8">
          <path d="M16 2H3Q1 2 1 4v14q0 2 2 2h18v-9M7 24h12M9 20v4M15 20v4M17 1h7v6q0 3-3.500 3T17 7zM17 5h7" />
        </svg>
        <svg viewBox="0 0 25 20" className="ml-[12px] h-[20px] w-[25px]" fill="none" stroke="currentColor" strokeWidth="1.8" strokeLinejoin="round">
          <path d="M1 7h4l5-5v16l-5-5H1zM14 7q2 3 0 6M17 4q4 6 0 12M20 1q6 9 0 18" />
        </svg>
        <p className="ml-[22px] text-right text-[18px]">
          9:45
          <span className="block">Thursday-29-May-2025</span>
        </p>
        <svg viewBox="0 0 22 22" className="ml-[12px] size-[22px]" fill="none" stroke="currentColor" strokeWidth="1.8" strokeLinejoin="round">
          <path d="M12 2Q4 2 4 10v3l-2 4h18l-2-4M8 18q3 5 6 0M9 8h4l-4 5h4M16 1h4l-4 5h5" />
        </svg>
      </div>
    </footer>
  );
}

export default function App() {
  return (
    <div className="flex h-screen flex-col bg-white p-[9px] pb-[8px] font-['Open_Sans','Noto_Sans',sans-serif] text-[#fbfbfe]">
      <div className="relative flex min-h-0 flex-1 flex-col bg-[#2b2a33] shadow-[0_0_8px_rgba(0,0,0,0.5)]">
        <TabStrip />
        <NavBar />
        <BookmarksBar />
        <div className="flex min-h-0 flex-1">
          <Launcher />
          <div className="flex min-w-0 flex-1 overflow-hidden border-t border-l border-[#3c3b42] bg-[#1c1b22]">
            <Categories />
            <Preferences />
            <div className="mt-[18px] mr-[3px] ml-auto h-[354px] w-[4px] rounded-full bg-[#77767d]" />
          </div>
        </div>
        <Taskbar />
        {/* pointer */}
        <svg viewBox="0 0 14 22" className="absolute top-[1043px] left-[85px] h-[24px] w-[15px]" aria-hidden="true">
          <path d="M1 1v17l4-4 3 7 3-1-3-7h5z" fill="#fff" stroke="#000" />
        </svg>
      </div>
    </div>
  );
}
